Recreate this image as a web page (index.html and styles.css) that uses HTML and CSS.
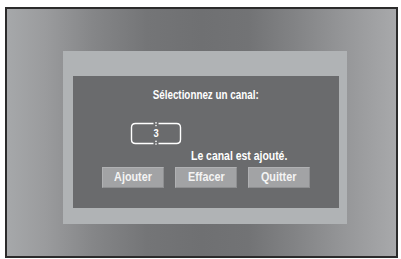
FILE: index.html
```html
<!DOCTYPE html>
<html>
<head>
<meta charset="utf-8">
<link rel="stylesheet" href="styles.css">
</head>
<body>
<div class="frame">
  <div class="outer-panel">
    <div class="dialog">
      <div class="title"><span class="cond title-text">Sélectionnez un canal:</span></div>
      <div class="channel">
        <svg class="channel-box" width="52" height="23" viewBox="0 0 52 23">
          <path d="M23.5 1.5 H5.5 Q1.5 1.5 1.5 5.5 V17.5 Q1.5 21.5 5.5 21.5 H23.5" fill="none" stroke="#fff" stroke-width="1.4"/>
          <path d="M28.5 1.5 H46.5 Q50.5 1.5 50.5 5.5 V17.5 Q50.5 21.5 46.5 21.5 H28.5" fill="none" stroke="#fff" stroke-width="1.4"/>
          <circle cx="26" cy="0.9" r="0.8" fill="#fff"/>
          <circle cx="26" cy="3.6" r="0.8" fill="#fff"/>
          <circle cx="26" cy="19.4" r="0.8" fill="#fff"/>
          <circle cx="26" cy="22.1" r="0.8" fill="#fff"/>
        </svg>
        <span class="channel-num"><span class="cond num-text">3</span></span>
      </div>
      <div class="message"><span class="cond msg-text">Le canal est ajouté.</span></div>
      <div class="buttons">
        <div class="btn"><span class="cond btn-text">Ajouter</span></div>
        <div class="btn"><span class="cond btn-text">Effacer</span></div>
        <div class="btn"><span class="cond btn-text">Quitter</span></div>
      </div>
    </div>
  </div>
</div>
</body>
</html>
```

FILE: styles.css
```css
html, body {
  margin: 0;
  padding: 0;
  background: #ffffff;
}
body {
  width: 401px;
  height: 259px;
  overflow: hidden;
  font-family: "Liberation Sans", Arial, sans-serif;
  font-weight: bold;
  color: #ffffff;
}
.frame {
  box-sizing: border-box;
  margin: 7px 0 0 5px;
  width: 393px;
  height: 251px;
  border: 2px solid #2b2b2b;
  padding: 42px 0 0 56px;
  background: linear-gradient(to right, #a6a8aa 0%, #9a9b9d 10%, #858688 22%, #747577 36%, #6f7072 50%, #727375 62%, #828385 74%, #97989a 88%, #a8a9ab 100%);
}
.outer-panel {
  box-sizing: border-box;
  width: 284px;
  height: 173px;
  background: #b0b3b5;
  padding: 25px 0 0 10px;
}
.dialog {
  width: 266px;
  height: 132px;
  background: #6a6b6d;
  display: flex;
  flex-direction: column;
  align-items: flex-start;
}
.cond {
  display: inline-block;
  white-space: nowrap;
}
.title {
  width: 100%;
  text-align: center;
  font-size: 12px;
  line-height: 14px;
  margin-top: 12px;
}
.title-text {
  transform: scaleX(0.82);
  transform-origin: center;
}
.channel {
  position: relative;
  margin: 20px 0 0 57px;
  width: 52px;
  height: 23px;
}
.channel-box {
  display: block;
}
.channel-num {
  position: absolute;
  left: 0;
  top: 0;
  width: 52px;
  line-height: 23px;
  text-align: center;
  font-size: 11px;
}
.num-text {
  transform: scaleX(0.85);
}
.message {
  margin: 4px 0 0 118px;
  font-size: 12px;
  line-height: 14px;
}
.msg-text {
  transform: scaleX(0.87);
  transform-origin: left center;
}
.buttons {
  display: flex;
  gap: 11px;
  margin: 4px 0 0 29px;
}
.btn {
  box-sizing: border-box;
  width: 62px;
  height: 21px;
  background: #a2a3a5;
  border: 1px solid #8e8f91;
  border-top-color: #b0b1b3;
  border-left-color: #b0b1b3;
  text-align: center;
  font-size: 12px;
  line-height: 19px;
  color: #f4f4f4;
}
.btn-text {
  transform: scaleX(0.9);
  transform-origin: center;
}
```
